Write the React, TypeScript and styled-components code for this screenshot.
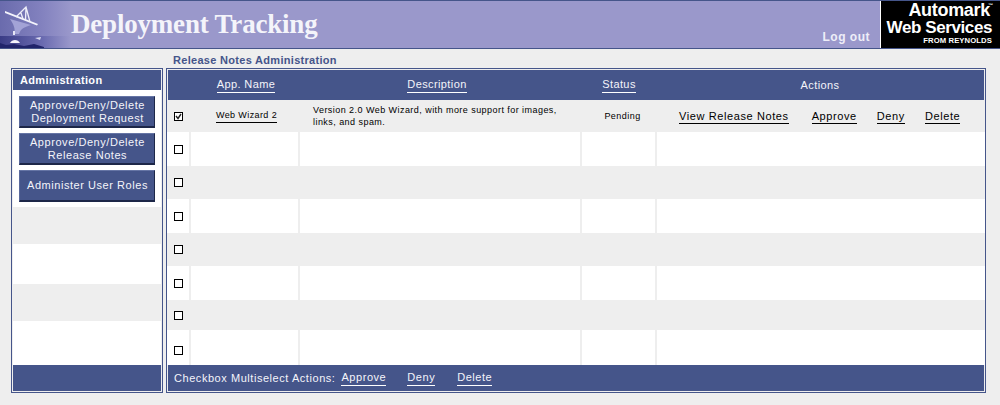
import React from 'react'
import styled, { createGlobalStyle } from 'styled-components'

const NAVY = '#45558a'
const GREY = '#eeeeee'

const GlobalStyle = createGlobalStyle`
  html, body {
    margin: 0;
    padding: 0;
    background: ${GREY};
    font-family: 'Liberation Sans', Arial, sans-serif;
  }
`

const Page = styled.div`
  width: 1000px;
  height: 405px;
  overflow: hidden;
`

const Header = styled.header`
  height: 49px;
  box-sizing: border-box;
  display: flex;
  align-items: stretch;
  background: #9a98cb;
  border-top: 1px solid ${NAVY};
  border-bottom: 1px solid ${NAVY};
`

const Dish = styled.svg`
  width: 71px;
  height: 47px;
  flex: none;
  display: block;
`

const Title = styled.h1`
  margin: 0;
  flex: 1;
  font-family: 'Liberation Serif', 'Times New Roman', serif;
  font-size: 27px;
  line-height: 46px;
  font-weight: 700;
  letter-spacing: -0.2px;
  color: #f4f4fa;
`

const LogOut = styled.a`
  align-self: flex-end;
  margin-right: 10px;
  margin-bottom: 4px;
  font-size: 12px;
  line-height: 14px;
  font-weight: 700;
  letter-spacing: 0.5px;
  color: #eeeef8;
`

const Logo = styled.div`
  width: 120px;
  flex: none;
  box-sizing: border-box;
  background: #000;
  border-left: 1px solid #fff;
  color: #fff;
  font-weight: 700;
  text-align: right;
  padding: 1px 8px 0 0;
`

const LogoTop = styled.div`
  position: relative;
  padding-right: 2px;
  font-size: 18px;
  line-height: 17px;
  letter-spacing: -0.3px;
`

const Tm = styled.span`
  position: absolute;
  right: -1px;
  top: 1px;
  font-size: 5px;
  line-height: 5px;
  letter-spacing: 0;
`

const LogoMain = styled.div`
  font-size: 17px;
  line-height: 17px;
  letter-spacing: -0.4px;
  white-space: nowrap;
`

const LogoSmall = styled.div`
  font-size: 7.7px;
  line-height: 9px;
  letter-spacing: 0.1px;
`

const SubTitle = styled.div`
  height: 19px;
  padding-left: 173px;
  font-size: 11px;
  line-height: 22px;
  font-weight: 700;
  letter-spacing: 0.3px;
  color: ${NAVY};
`

const Columns = styled.div`
  display: flex;
  gap: 3px;
  padding-left: 11px;
`

const Frame = styled.div<{ $width: number }>`
  width: ${(p) => p.$width}px;
  height: 325px;
  box-sizing: border-box;
  border: 1px solid ${NAVY};
  padding: 1px 0;
  display: flex;
  flex-direction: column;
`

const SideHead = styled.div`
  height: 20px;
  margin: 0 1px;
  padding-left: 7px;
  background: ${NAVY};
  color: #fff;
  font-size: 11px;
  line-height: 20px;
  font-weight: 700;
  letter-spacing: 0.35px;
`

const SideMenu = styled.div`
  height: 117px;
  padding: 6px 6px 0;
  margin: 0 1px;
  box-sizing: border-box;
  background: #fff;
  display: flex;
  flex-direction: column;
  gap: 5px;
`

const MenuButton = styled.div`
  height: 32px;
  box-sizing: border-box;
  padding-left: 1px;
  background: ${NAVY};
  border-top: 1px solid #6675a5;
  border-left: 1px solid #5a6a9c;
  border-right: 1px solid #1d2748;
  border-bottom: 2px solid #1d2748;
  color: #f4f4fa;
  font-size: 11px;
  line-height: 13px;
  letter-spacing: 0.55px;
  text-align: center;
  display: flex;
  align-items: center;
  justify-content: center;
`

const SideBand = styled.div<{ $h: number; $white?: boolean }>`
  height: ${(p) => p.$h}px;
  margin: 0 1px;
  background: ${(p) => (p.$white ? '#fff' : GREY)};
`

const SideFoot = styled.div`
  flex: 1;
  margin: 0 1px;
  background: ${NAVY};
`

const COLUMNS = '24px 109px 282px 75px 1fr'

const TableHead = styled.div`
  height: 30px;
  margin: 0 1px;
  display: grid;
  grid-template-columns: 23px 110px 272px 92px 310px;
  background: ${NAVY};
  color: #f4f4fa;
  font-size: 11px;
  letter-spacing: 0.4px;
  align-items: center;
  text-align: center;
`

const HeadLink = styled.span`
  justify-self: center;
  border-bottom: 1px solid #fff;
  line-height: 12px;
  padding-top: 1px;
  padding-bottom: 2px;
`

const Row = styled.div<{ $h: number; $grey?: boolean }>`
  height: ${(p) => p.$h}px;
  display: grid;
  grid-template-columns: ${COLUMNS};
  background: ${(p) => (p.$grey ? GREY : '#fff')};
`

const Cell = styled.div<{ $shift?: number; $drop?: number }>`
  box-sizing: border-box;
  border-right: 2px solid ${GREY};
  display: flex;
  align-items: center;
  justify-content: center;
  min-width: 0;
  padding-left: ${(p) => p.$shift ?? 0}px;
  padding-top: ${(p) => p.$drop ?? 0}px;
`

const ActionsCell = styled(Cell)`
  border-right: 0;
  justify-content: flex-start;
  padding-left: 22px;
  padding-top: 2px;
`

const Check = styled.span`
  width: 7px;
  height: 7px;
  border: 1px solid #000;
  background: #fff;
  display: block;
  position: relative;

  svg {
    display: block;
    position: absolute;
    left: 0;
    top: 0;
  }
`

const SmallLink = styled.a`
  font-size: 9px;
  line-height: 11px;
  letter-spacing: 0.4px;
  color: #000;
  border-bottom: 1px solid #000;
  padding-bottom: 1px;
`

const SmallText = styled.div`
  font-size: 9px;
  line-height: 12px;
  letter-spacing: 0.45px;
  color: #000;
`

const DescText = styled(SmallText)`
  width: 100%;
  padding-left: 13px;
  box-sizing: border-box;
`

const ActionLink = styled.a<{ $gap: number }>`
  margin-right: ${(p) => p.$gap}px;
  font-size: 11px;
  line-height: 12px;
  letter-spacing: 0.6px;
  color: #000;
  border-bottom: 1px solid #000;
  padding-bottom: 1px;
  white-space: nowrap;
`

const TableFoot = styled.div`
  flex: 1;
  margin: 0 1px;
  padding-left: 6px;
  display: flex;
  align-items: center;
  background: ${NAVY};
  color: #f4f4fa;
  font-size: 11px;
  letter-spacing: 0.55px;
  white-space: nowrap;
`

const FootLink = styled.span<{ $gap: number }>`
  margin-left: ${(p) => p.$gap}px;
  border-bottom: 1px solid #fff;
  line-height: 12px;
  padding-bottom: 2px;
  margin-top: 1px;
`

const rowHeights = [34, 33, 34, 33, 34, 30, 35]

function SatelliteDish() {
  return (
    <Dish viewBox="0 0 71 47" aria-hidden>
      <defs>
        <linearGradient id="fade" x1="0" y1="0" x2="1" y2="0">
          <stop offset="0" stopColor="#6a6bad" />
          <stop offset="0.6" stopColor="#8382bf" />
          <stop offset="1" stopColor="#9a98cb" />
        </linearGradient>
        <linearGradient id="ground" x1="0" y1="0" x2="1" y2="0">
          <stop offset="0" stopColor="#3a3c86" />
          <stop offset="0.6" stopColor="#6a6bb0" />
          <stop offset="1" stopColor="#9a98cb" />
        </linearGradient>
      </defs>
      <rect width="71" height="47" fill="url(#fade)" />
      <rect y="35" width="71" height="12" fill="url(#ground)" />
      <path d="M10 18 L31 24 C25 26 21 27 19 33 L14 33 C16 27 13 23 10 18 Z" fill="#a3a3d6" />
      <path d="M5 10 L38 23 L37 24.5 L5 12 Z" fill="#f4f4fc" />
      <path d="M16 16 L26 6 L30 21 M21 12 L23 18 M26 6 L25.5 19" fill="none" stroke="#eeeef9" strokeWidth="1.3" />
      <rect x="13" y="30" width="2" height="4" fill="#e6e6f6" />
      <path d="M10 42 C12 38 18 38 20 42 Z" fill="#f4f4fb" />
      <path d="M35 37 L41 36 L40 39 Z" fill="#dcdcf2" />
      <path d="M0 47 L0 42 L6 44 L14 43 L24 45 L34 43 L44 46 L44 47 Z" fill="#20246a" />
    </Dish>
  )
}

function CheckBox({ checked }: { checked?: boolean }) {
  return (
    <Check>
      {checked && (
        <svg width="7" height="7" viewBox="0 0 7 7">
          <path d="M1 3 L3 5.5 L6 1" fill="none" stroke="#222" strokeWidth="1.4" />
        </svg>
      )}
    </Check>
  )
}

export default function App() {
  return (
    <Page>
      <GlobalStyle />
      <Header>
        <SatelliteDish />
        <Title>Deployment Tracking</Title>
        <LogOut>Log out</LogOut>
        <Logo>
          <LogoTop>Automark<Tm>™</Tm></LogoTop>
          <LogoMain>Web Services</LogoMain>
          <LogoSmall>FROM REYNOLDS</LogoSmall>
        </Logo>
      </Header>
      <SubTitle>Release Notes Administration</SubTitle>
      <Columns>
        <Frame $width={152}>
          <SideHead>Administration</SideHead>
          <SideMenu>
            <MenuButton>Approve/Deny/Delete<br />Deployment Request</MenuButton>
            <MenuButton>Approve/Deny/Delete<br />Release Notes</MenuButton>
            <MenuButton>Administer User Roles</MenuButton>
          </SideMenu>
          <SideBand $h={37} />
          <SideBand $h={40} $white />
          <SideBand $h={37} />
          <SideBand $h={44} $white />
          <SideFoot />
        </Frame>
        <Frame $width={820}>
          <TableHead>
            <span />
            <HeadLink>App. Name</HeadLink>
            <HeadLink>Description</HeadLink>
            <HeadLink>Status</HeadLink>
            <span>Actions</span>
          </TableHead>
          <Row $h={32} $grey>
            <Cell><CheckBox checked /></Cell>
            <Cell $shift={4}><SmallLink>Web Wizard 2</SmallLink></Cell>
            <Cell>
              <DescText>
                Version 2.0 Web Wizard, with more support for images,<br />links, and spam.
              </DescText>
            </Cell>
            <Cell $shift={8}><SmallText>Pending</SmallText></Cell>
            <ActionsCell>
              <ActionLink $gap={23}>View Release Notes</ActionLink>
              <ActionLink $gap={20}>Approve</ActionLink>
              <ActionLink $gap={20}>Deny</ActionLink>
              <ActionLink $gap={0}>Delete</ActionLink>
            </ActionsCell>
          </Row>
          {rowHeights.map((h, i) => (
            <Row key={i} $h={h} $grey={i % 2 === 1}>
              <Cell $drop={i === 6 ? 5 : 0}><CheckBox /></Cell>
              <Cell />
              <Cell />
              <Cell />
              <ActionsCell />
            </Row>
          ))}
          <TableFoot>
            Checkbox Multiselect Actions:
            <FootLink $gap={6}>Approve</FootLink>
            <FootLink $gap={21}>Deny</FootLink>
            <FootLink $gap={22}>Delete</FootLink>
          </TableFoot>
        </Frame>
      </Columns>
    </Page>
  )
}
